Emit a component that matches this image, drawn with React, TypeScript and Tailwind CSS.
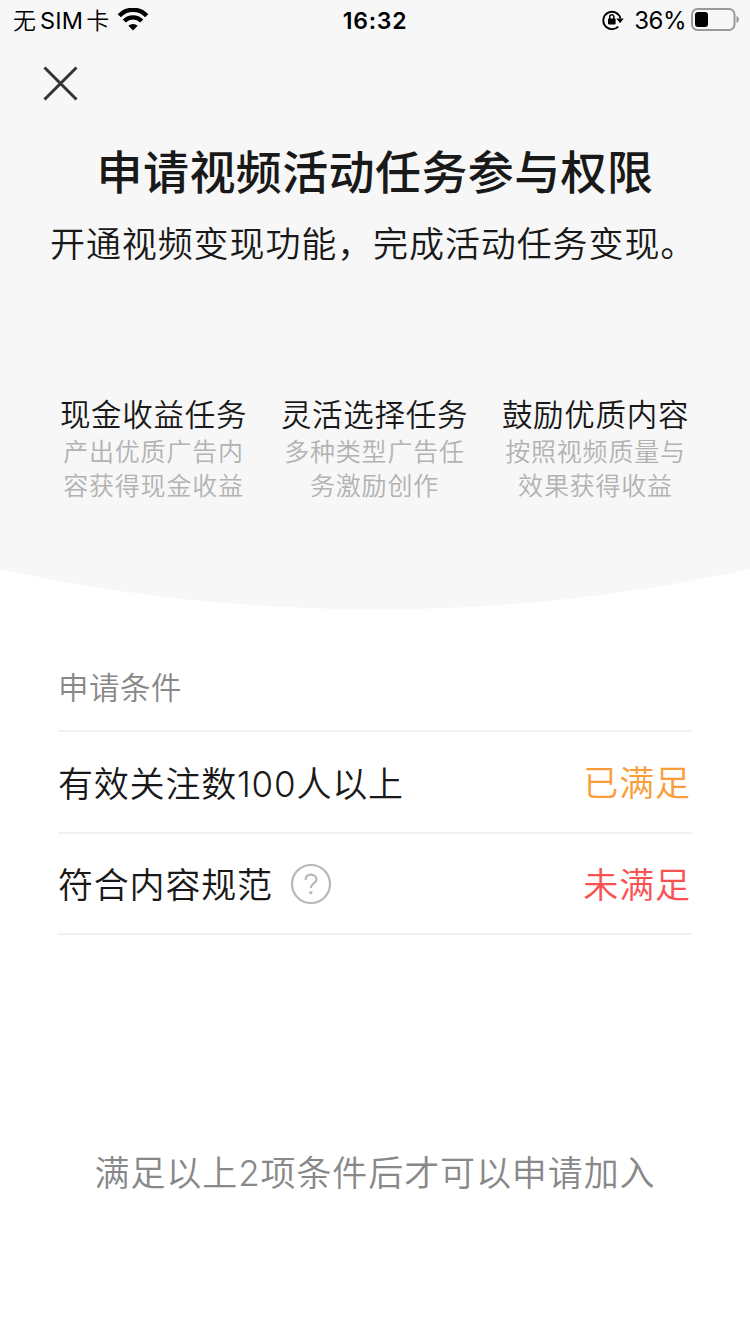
import React from 'react';

const benefits = [
  { title: '现金收益任务', lines: ['产出优质广告内', '容获得现金收益'] },
  { title: '灵活选择任务', lines: ['多种类型广告任', '务激励创作'] },
  { title: '鼓励优质内容', lines: ['按照视频质量与', '效果获得收益'] },
];

const conditions = [
  { label: '有效关注数100人以上', passed: true, help: false },
  { label: '符合内容规范', passed: false, help: true },
];

const WifiIcon = () => (
  <svg className="ml-2" width="32" height="24" viewBox="0 0 32 24" fill="none">
    <path d="M2.3 7.7A19 19 0 0 1 29.7 7.7" stroke="#000" strokeWidth="4.4" />
    <path d="M7.3 13A12.2 12.2 0 0 1 24.7 13" stroke="#000" strokeWidth="4.4" />
    <path d="M11.3 17.8A6.8 6.8 0 0 1 20.7 17.8L16 22.6Z" fill="#000" />
  </svg>
);

const RotationLockIcon = () => (
  <svg width="22" height="22" viewBox="0 0 22 22" fill="none">
    <path d="M16.2 17.6A8.7 8.7 0 1 1 18.4 9.2" stroke="#000" strokeWidth="1.9" />
    <path d="M14.3 9.4H21.7L18.1 14.2Z" fill="#000" />
    <rect x="6" y="9.4" width="7.6" height="6" rx="0.8" fill="#000" />
    <path d="M7.7 10V7.9a2.1 2.1 0 0 1 4.2 0V10" stroke="#000" strokeWidth="1.5" />
  </svg>
);

const BatteryIcon = () => (
  <svg className="ml-[5px]" width="48" height="24" viewBox="0 0 48 24" fill="none">
    <rect x="1" y="1" width="42.5" height="21" rx="5.5" stroke="#999" strokeWidth="2" />
    <rect x="4" y="4" width="13" height="15" rx="3" fill="#000" />
    <path d="M45.5 8c1.6.6 2.4 2 2.4 3.5s-.8 2.9-2.4 3.5Z" fill="#999" />
  </svg>
);

const HelpIcon = () => (
  <svg className="ml-[17px] mt-0.5" width="42" height="42" viewBox="0 0 42 42" fill="none" stroke="#b8b8b8">
    <circle cx="21" cy="21" r="19" strokeWidth="2.2" />
    <path
      d="M15.6 17C15.6 13.5 17.8 11.6 21 11.6S26.5 13.7 26.5 16.6C26.5 20.4 20.8 20.4 20.8 25"
      strokeWidth="2.2"
    />
    <circle cx="20.8" cy="29.6" r="1.7" fill="#b8b8b8" stroke="none" />
  </svg>
);

const StatusBar = () => (
  <div className="grid h-10 grid-cols-3 items-center font-normal text-black">
    <div className="flex h-10 items-center pl-[13px]">
      <span className="pt-0.5 text-[23px] font-[350] leading-10 tracking-[1px]">无</span>
      <span className="ml-[3px] pt-0.5 text-[23.5px] leading-10 tracking-[0.2px]">SIM</span>
      <span className="ml-[3px] pt-0.5 text-[23px] font-[350] leading-10">卡</span>
      <WifiIcon />
    </div>
    <div className="h-10 pt-px text-center text-[23px] font-semibold leading-10 tracking-[0.8px]">16:32</div>
    <div className="flex h-10 items-center justify-end pr-[11px]">
      <RotationLockIcon />
      <span className="ml-[10px] pt-px text-[24px] leading-10 tracking-[-0.5px]">36%</span>
      <BatteryIcon />
    </div>
  </div>
);

const App = () => {
  return (
    <div className="min-h-[1334px] w-[750px] bg-white font-['Inter','Noto_Sans_CJK_SC',sans-serif] font-[350] text-[#191919]">
      <header className="h-[569px] bg-[#f7f7f7]">
        <StatusBar />
        <button className="ml-[43px] mt-[26px] block" aria-label="关闭">
          <svg width="36" height="36" viewBox="0 0 36 36" fill="none">
            <path d="M1.5 1.5L33.5 33.5M33.5 1.5L1.5 33.5" stroke="#333" strokeWidth="3" />
          </svg>
        </button>
        <h1 className="mt-10 whitespace-nowrap text-center text-[46px] font-medium leading-[60px] tracking-[0.4px]">
          申请视频活动任务参与权限
        </h1>
        <p className="mt-[17px] whitespace-nowrap pl-[50px] text-[35px] leading-[50px] tracking-[0.9px]">
          开通视频变现功能，完成活动任务变现。
        </p>
        <div className="mt-[126px] flex justify-between pl-[59px] pr-[60px]">
          {benefits.map((item) => (
            <div key={item.title} className="w-[189px] text-center">
              <div className="whitespace-nowrap text-[30.5px] leading-10 tracking-[0.7px]">{item.title}</div>
              <div className="text-[25px] leading-[34px] tracking-[0.8px] text-[#b2b2b2]">
                {item.lines.map((line) => (
                  <div key={line}>{line}</div>
                ))}
              </div>
            </div>
          ))}
        </div>
      </header>
      <svg className="block" width="750" height="41" viewBox="0 0 750 41">
        <path d="M0 0A1756 1756 0 0 0 750 0Z" fill="#f7f7f7" />
      </svg>

      <main className="px-[58px]">
        <h2 className="border-b-2 border-[#f1f1f1] pb-[21px] pt-[57px] text-[30.5px] leading-[42px] tracking-[0.5px] text-[#888]">
          申请条件
        </h2>
        {conditions.map((item) => (
          <div key={item.label} className="flex h-[101.5px] items-center border-b-2 border-[#f1f1f1] text-[35px]">
            <span className="pt-1 tracking-[0.8px]">{item.label}</span>
            {item.help && <HelpIcon />}
            <span
              className={
                item.passed
                  ? 'ml-auto pr-px pt-[3px] tracking-[0.9px] text-[#fa9d3b]'
                  : 'ml-auto pr-px pt-[3px] tracking-[0.9px] text-[#fa5151]'
              }
            >
              {item.passed ? '已满足' : '未满足'}
            </span>
          </div>
        ))}
        <p className="mt-[213px] text-center text-[35px] leading-[50px] tracking-[0.9px] text-[#888]">
          满足以上2项条件后才可以申请加入
        </p>
      </main>
    </div>
  );
};

export default App;
